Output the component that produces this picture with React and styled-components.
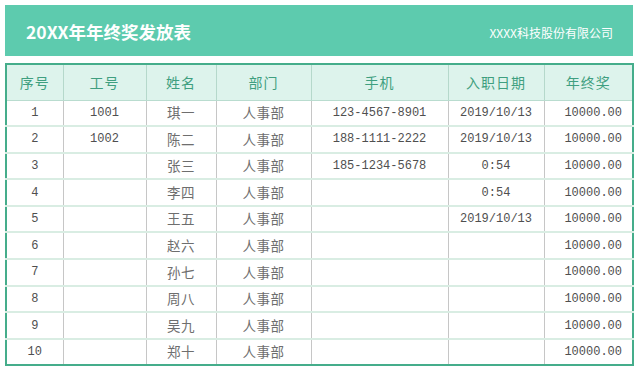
import React from "react";
import styled, { createGlobalStyle } from "styled-components";

const columns = [
  { key: "no", label: "序号", width: 57, align: "center" },
  { key: "id", label: "工号", width: 83, align: "center" },
  { key: "name", label: "姓名", width: 70, align: "center", zh: true },
  { key: "dept", label: "部门", width: 95, align: "center", zh: true },
  { key: "phone", label: "手机", width: 137, align: "center" },
  { key: "date", label: "入职日期", width: 96, align: "center" },
  { key: "bonus", label: "年终奖", width: 89, align: "right" },
];

const rows = [
  { no: "1", id: "1001", name: "琪一", dept: "人事部", phone: "123-4567-8901", date: "2019/10/13", bonus: "10000.00" },
  { no: "2", id: "1002", name: "陈二", dept: "人事部", phone: "188-1111-2222", date: "2019/10/13", bonus: "10000.00" },
  { no: "3", id: "", name: "张三", dept: "人事部", phone: "185-1234-5678", date: "0:54", bonus: "10000.00" },
  { no: "4", id: "", name: "李四", dept: "人事部", phone: "", date: "0:54", bonus: "10000.00" },
  { no: "5", id: "", name: "王五", dept: "人事部", phone: "", date: "2019/10/13", bonus: "10000.00" },
  { no: "6", id: "", name: "赵六", dept: "人事部", phone: "", date: "", bonus: "10000.00" },
  { no: "7", id: "", name: "孙七", dept: "人事部", phone: "", date: "", bonus: "10000.00" },
  { no: "8", id: "", name: "周八", dept: "人事部", phone: "", date: "", bonus: "10000.00" },
  { no: "9", id: "", name: "吴九", dept: "人事部", phone: "", date: "", bonus: "10000.00" },
  { no: "10", id: "", name: "郑十", dept: "人事部", phone: "", date: "", bonus: "10000.00" },
];

const App = () => {
  return (
    <Page>
      <GlobalStyle />
      <Banner>
        <Title>20XX年年终奖发放表</Title>
        <Company>XXXX科技股份有限公司</Company>
      </Banner>
      <Sheet>
        <colgroup>
          {columns.map((c) => (
            <col key={c.key} style={{ width: c.width }} />
          ))}
        </colgroup>
        <thead>
          <tr>
            {columns.map((c) => (
              <HeadCell key={c.key}>{c.label}</HeadCell>
            ))}
          </tr>
        </thead>
        <tbody>
          {rows.map((r, i) => (
            <Row key={r.no} $last={i === rows.length - 1}>
              {columns.map((c) => (
                <Cell key={c.key} $align={c.align} $zh={c.zh}>
                  {r[c.key]}
                </Cell>
              ))}
            </Row>
          ))}
        </tbody>
      </Sheet>
    </Page>
  );
};

export default App;

const GlobalStyle = createGlobalStyle`
  html, body {
    margin: 0;
    padding: 0;
    background: #ffffff;
  }
  body {
    font-family: "Noto Sans CJK SC", "Liberation Sans", sans-serif;
  }
`;

const Page = styled.div`
  width: 639px;
  padding: 5px 6px 0 5px;
  box-sizing: border-box;
`;

const Banner = styled.header`
  height: 51px;
  background: #5dcbae;
  display: flex;
  align-items: center;
  justify-content: space-between;
  padding: 0 20px 0 21px;
  margin-bottom: 7px;
  color: #ffffff;
`;

const Title = styled.h1`
  margin: 2px 0 0;
  font-size: 17.5px;
  font-weight: 700;
  font-family: "Noto Sans CJK SC", "Liberation Sans", sans-serif;
`;

const Company = styled.span`
  font-size: 12px;
  margin-top: 3px;
  font-family: "Noto Sans CJK SC", "Liberation Sans", sans-serif;
`;

const Sheet = styled.table`
  width: 627px;
  border-collapse: collapse;
  table-layout: fixed;
  border: 2px solid #45ad8b;
`;

const HeadCell = styled.th`
  height: 36px;
  box-sizing: border-box;
  padding: 0;
  background: #ddf3ec;
  color: #3f9f80;
  font-size: 14px;
  font-weight: 400;
  letter-spacing: 1px;
  border-right: 1px solid #b5d8cb;
  border-bottom: 1px solid #b9dccf;
  font-family: "Noto Sans CJK SC", sans-serif;
`;

const Row = styled.tr`
  border-bottom: ${(p) => (p.$last ? "none" : "2px solid #d9ede3")};
`;

const Cell = styled.td`
  height: 24.6px;
  box-sizing: content-box;
  padding: ${(p) => (p.$align === "right" ? "0 10px 0 0" : "0")};
  text-align: ${(p) => p.$align};
  color: ${(p) => (p.$zh ? "#6e6e6e" : "#4f4f4f")};
  font-size: ${(p) => (p.$zh ? "13.5px" : "12px")};
  letter-spacing: ${(p) => (p.$zh ? "0.5px" : "0")};
  font-family: ${(p) =>
    p.$zh
      ? '"Noto Sans CJK SC", sans-serif'
      : '"Liberation Mono", "Noto Sans CJK SC", monospace'};
  border-right: 1px solid #c6c6c6;
  white-space: nowrap;
  line-height: 1;
`;
